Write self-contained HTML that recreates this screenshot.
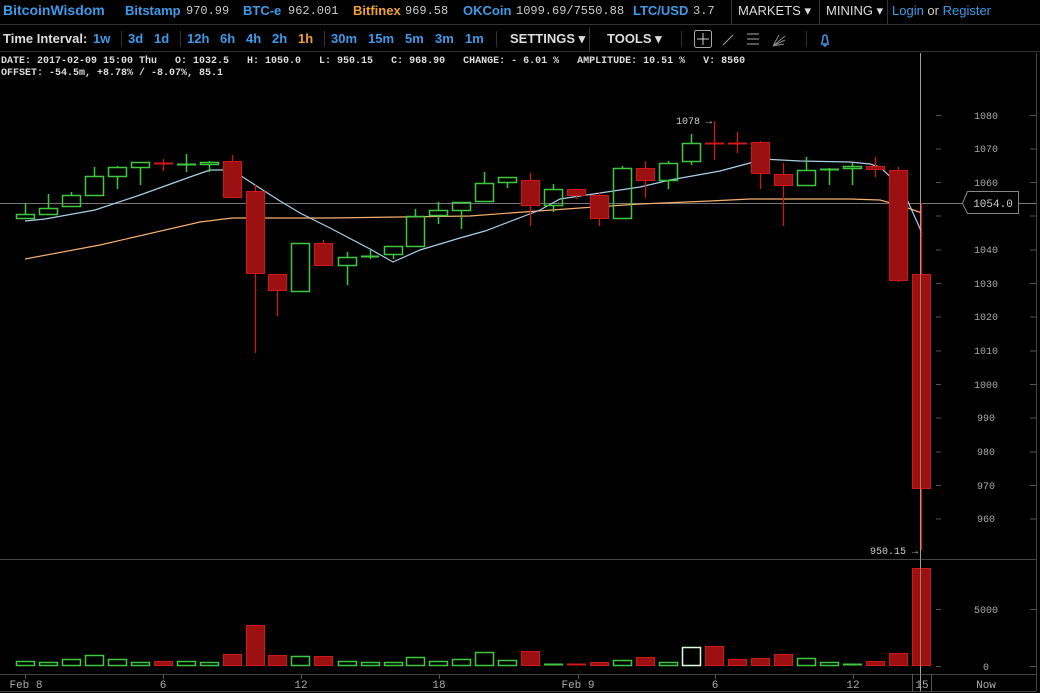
<!DOCTYPE html>
<html><head><meta charset="utf-8"><style>
*{margin:0;padding:0;box-sizing:border-box}
body{width:1040px;height:693px;background:#000;overflow:hidden;font-family:"Liberation Sans",sans-serif;position:relative}
.top{position:absolute;left:0;top:0;width:1040px;height:25px;border-bottom:1px solid #333;font-size:13px;white-space:nowrap}
.top span{position:absolute;top:3px}
.b{color:#3d9be9;font-weight:bold}
.m{font-family:"Liberation Mono",monospace;color:#ccc;font-size:12px;top:4px!important}
.bar2{position:absolute;left:0;top:26px;width:1040px;height:26px;border-bottom:1px solid #333;font-size:13px;white-space:nowrap;font-weight:bold}
.bar2 span{position:absolute;top:5px}
.w{color:#ddd}
.sep{position:absolute;width:1px;background:#333}
.info{position:absolute;left:1px;font-family:"Liberation Mono",monospace;font-size:10px;color:#ddd;white-space:pre;font-weight:bold}
svg{position:absolute;left:0;top:0}
</style></head><body>
<div class="top">
<span class="b" style="left:3px;font-size:14px;top:2px">BitcoinWisdom</span>
<span class="b" style="left:125px">Bitstamp</span><span class="m" style="left:186px">970.99</span>
<span class="b" style="left:243px">BTC-e</span><span class="m" style="left:288px">962.001</span>
<span class="b" style="left:353px;color:#f0a030">Bitfinex</span><span class="m" style="left:405px">969.58</span>
<span class="b" style="left:463px">OKCoin</span><span class="m" style="left:516px">1099.69/7550.88</span>
<span class="b" style="left:633px">LTC/USD</span><span class="m" style="left:693px">3.7</span>
<span class="w" style="left:738px">MARKETS ▾</span>
<span class="w" style="left:826px">MINING ▾</span>
<span style="left:892px;color:#3d9be9">Login <span style="position:static;color:#ccc">or</span> Register</span>
</div>
<div class="sep" style="left:731px;top:0;height:25px"></div>
<div class="sep" style="left:819px;top:0;height:25px"></div>
<div class="sep" style="left:887px;top:0;height:25px"></div>
<div class="bar2">
<span class="w" style="left:3px">Time Interval:</span>
<span class="b" style="left:93px">1w</span>
<span class="b" style="left:128px">3d</span><span class="b" style="left:154px">1d</span>
<span class="b" style="left:187px">12h</span><span class="b" style="left:220px">6h</span><span class="b" style="left:246px">4h</span><span class="b" style="left:272px">2h</span><span class="b" style="left:298px;color:#f0a030">1h</span>
<span class="b" style="left:331px">30m</span><span class="b" style="left:368px">15m</span><span class="b" style="left:405px">5m</span><span class="b" style="left:435px">3m</span><span class="b" style="left:465px">1m</span>
<span class="w" style="left:510px">SETTINGS ▾</span>
<span class="w" style="left:607px">TOOLS ▾</span>
</div>
<div class="sep" style="left:121px;top:31px;height:16px"></div>
<div class="sep" style="left:180px;top:31px;height:16px"></div>
<div class="sep" style="left:324px;top:31px;height:16px"></div>
<div class="sep" style="left:496px;top:31px;height:16px"></div>
<div class="sep" style="left:589px;top:27px;height:25px"></div>
<div class="sep" style="left:681px;top:31px;height:16px"></div>
<div class="sep" style="left:806px;top:31px;height:16px"></div>
<div class="info" style="top:56px">DATE: 2017-02-09 15:00 Thu   O: 1032.5   H: 1050.0   L: 950.15   C: 968.90   CHANGE: - 6.01 %   AMPLITUDE: 10.51 %   V: 8560</div>
<div class="info" style="top:68px">OFFSET: -54.5m, +8.78% / -8.07%, 85.1</div>
<svg width="1040" height="693" viewBox="0 0 1040 693">
<rect x="694.5" y="30.5" width="17" height="17" rx="2" fill="none" stroke="#aaa"/>
<path d="M703 33v12M697 39h12" stroke="#ccc"/>
<path d="M723 45l10-10" stroke="#aaa"/>
<path d="M747 34h12M747 39h12M747 44h12" stroke="#aaa"/>
<path d="M773 46l12-10M773 46l12-6M773 46l11-2M773 46l6-11" stroke="#888"/>
<path d="M821 44h8M822 43c0-2 1-2 1-6a2 2 0 0 1 4 0c0 4 1 4 1 6M824 45a1 1 0 0 0 2 0" stroke="#3d9be9" stroke-width="1.5" fill="none"/>
<line x1="920.5" y1="53" x2="920.5" y2="691" stroke="#777"/>
<line x1="1036.5" y1="53" x2="1036.5" y2="691" stroke="#444"/>
<line x1="0" y1="559.5" x2="1036" y2="559.5" stroke="#444"/>
<line x1="0" y1="674.5" x2="1036" y2="674.5" stroke="#444"/>
<line x1="0" y1="691.5" x2="1036" y2="691.5" stroke="#444"/>
<line x1="0" y1="203.5" x2="1036" y2="203.5" stroke="#777"/>
<g font-family="Liberation Mono,monospace" font-size="10" fill="#aaa" text-anchor="middle">
<text x="986" y="119">1080</text><text x="986" y="152">1070</text><text x="986" y="186">1060</text><text x="986" y="253">1040</text><text x="986" y="287">1030</text><text x="986" y="320">1020</text><text x="986" y="354">1010</text><text x="986" y="388">1000</text><text x="986" y="421">990</text><text x="986" y="455">980</text><text x="986" y="489">970</text><text x="986" y="522">960</text>
<text x="986" y="613">5000</text><text x="986" y="670">0</text>
<text x="986" y="688" font-size="11">Now</text>
<text x="26" y="688" font-size="11">Feb 8</text><text x="163" y="688" font-size="11">6</text><text x="301" y="688" font-size="11">12</text><text x="439" y="688" font-size="11">18</text><text x="578" y="688" font-size="11">Feb 9</text><text x="715" y="688" font-size="11">6</text><text x="853" y="688" font-size="11">12</text><text x="922" y="688" font-size="11">15</text>
<text x="694" y="124" fill="#ccc">1078 →</text>
<text x="894" y="554" fill="#ccc">950.15 →</text>
</g>
<g stroke="#555">
<path d="M936 115.5h5M936 149h5M936 182.5h5M936 216h5M936 250h5M936 283.5h5M936 317h5M936 351h5M936 384.5h5M936 418h5M936 452h5M936 485.5h5M936 519h5M936 609.5h5M936 666.5h5"/>
<path d="M1030 115.5h6M1030 149h6M1030 182.5h6M1030 216h6M1030 250h6M1030 283.5h6M1030 317h6M1030 351h6M1030 384.5h6M1030 418h6M1030 452h6M1030 485.5h6M1030 519h6M1030 609.5h6M1030 666.5h6"/>
<path d="M25.5 674v5M163.5 674v5M301.5 674v5M439.5 674v5M578.5 674v5M715.5 674v5M853.5 674v5M912.5 674v17M931.5 674v17"/>
</g>
<path d="M962.5 203.5l5-12h51v22h-51z" fill="#000" stroke="#888"/>
<text x="993" y="207" font-family="Liberation Mono,monospace" font-size="11" fill="#ccc" text-anchor="middle">1054.0</text>
<polyline fill="none" stroke="#f5b070" stroke-width="1.2" points="25,259 100,245 200,222 232,218 245,218 330,218 400,217 470,216 510,213 580,208 640,204 710,201 750,199 850,199 880,200 905,207 922,213"/>
<polyline fill="none" stroke="#a8d0e8" stroke-width="1.2" points="25,221 45,219 95,210 140,195 190,177 210,170 232,170 255,185 280,201 300,213 330,228 370,249 393,262 420,250 460,238 485,231 540,210 560,199 600,193 640,187 670,180 720,171 750,163 762,159 800,161 850,162 870,164 880,167 900,186 905,195 922,233"/>
<g stroke="#3ec83e" stroke-width="1.5" fill="none">
<path d="M25.5 203v11M48.5 194v14M71.5 192v3M71.5 206v1M94.5 167v9M117.5 166v1M117.5 176v13M140.5 167v18M186.5 154v18M209.5 161v1M209.5 164v8M347.5 252v5M347.5 265v20M370.5 250v9M393.5 254v5M415.5 209v7M438.5 202v8M438.5 215v9M461.5 210v19M484.5 172v11M507.5 182v6M553.5 184v5M553.5 205v7M622.5 166v2M668.5 161v2M668.5 180v9M691.5 134v9M691.5 161v4M806.5 157v13M829.5 168v17M852.5 163v3M852.5 168v17"/>
<rect x="16.5" y="214.5" width="18" height="4"/><rect x="39.5" y="208.5" width="18" height="6"/><rect x="62.5" y="195.5" width="18" height="11"/><rect x="85.5" y="176.5" width="18" height="19"/><rect x="108.5" y="167.5" width="18" height="9"/><rect x="131.5" y="162.5" width="18" height="5"/><rect x="200.5" y="162.5" width="18" height="2"/>
<rect x="291.5" y="243.5" width="18" height="48"/><rect x="338.5" y="257.5" width="18" height="8"/><rect x="384.5" y="246.5" width="18" height="8"/><rect x="406.5" y="216.5" width="18" height="30"/><rect x="429.5" y="210.5" width="18" height="5"/><rect x="452.5" y="202.5" width="18" height="8"/>
<rect x="475.5" y="183.5" width="18" height="18"/><rect x="498.5" y="177.5" width="18" height="5"/><rect x="544.5" y="189.5" width="18" height="16"/><rect x="613.5" y="168.5" width="18" height="50"/><rect x="659.5" y="163.5" width="18" height="17"/><rect x="682.5" y="143.5" width="18" height="18"/><rect x="797.5" y="170.5" width="18" height="15"/><rect x="843.5" y="166.5" width="18" height="2"/>
<path d="M177 164.5h19M361 256.5h18M820 169.5h19" stroke-width="2"/>
</g>
<g stroke="#d01818" fill="#9b1010">
<path d="M163.5 159v12M232.5 155v6M255.5 185v168M277.5 290v26M323.5 240v3M530.5 173v53M576.5 195v4M599.5 192v34M645.5 161v37M714.5 121v39M737.5 132v21M760.5 141v48M783.5 163v63M875.5 157v20M898.5 167v115M921.5 203v347" fill="none" stroke-width="1.3"/>
<path d="M154 163.5h19M705 143.5h19M728 143.5h19" stroke-width="2" fill="none"/>
<rect x="223.5" y="161.5" width="18" height="36"/><rect x="246.5" y="191.5" width="18" height="82"/><rect x="268.5" y="274.5" width="18" height="16"/><rect x="314.5" y="243.5" width="18" height="22"/>
<rect x="521.5" y="180.5" width="18" height="25"/><rect x="567.5" y="189.5" width="18" height="6"/><rect x="590.5" y="195.5" width="18" height="23"/><rect x="636.5" y="168.5" width="18" height="12"/>
<rect x="751.5" y="142.5" width="18" height="31"/><rect x="774.5" y="174.5" width="18" height="11"/><rect x="866.5" y="166.5" width="18" height="3"/><rect x="889.5" y="170.5" width="18" height="110"/><rect x="912.5" y="274.5" width="18" height="214"/>
</g>
<g stroke="#3ec83e" stroke-width="1.5" fill="none">
<rect x="16.5" y="661.5" width="18" height="4"/><rect x="39.5" y="662.5" width="18" height="3"/><rect x="62.5" y="659.5" width="18" height="6"/><rect x="85.5" y="655.5" width="18" height="10"/><rect x="108.5" y="659.5" width="18" height="6"/><rect x="131.5" y="662.5" width="18" height="3"/><rect x="177.5" y="661.5" width="18" height="4"/><rect x="200.5" y="662.5" width="18" height="3"/>
<rect x="291.5" y="656.5" width="18" height="9"/><rect x="338.5" y="661.5" width="18" height="4"/><rect x="361.5" y="662.5" width="18" height="3"/><rect x="384.5" y="662.5" width="18" height="3"/><rect x="406.5" y="657.5" width="18" height="8"/><rect x="429.5" y="661.5" width="18" height="4"/><rect x="452.5" y="659.5" width="18" height="6"/><rect x="475.5" y="652.5" width="18" height="13"/><rect x="498.5" y="660.5" width="18" height="5"/>
<rect x="613.5" y="660.5" width="18" height="5"/><rect x="659.5" y="662.5" width="18" height="3"/><rect x="682.5" y="647.5" width="18" height="18" stroke="#dfd"/><rect x="797.5" y="658.5" width="18" height="7"/><rect x="820.5" y="662.5" width="18" height="3"/>
<path d="M544 664.5h19M843 664.5h19" stroke-width="2"/>
</g>
<g stroke="#d01818" fill="#9b1010">
<rect x="154.5" y="661.5" width="18" height="4"/><rect x="223.5" y="654.5" width="18" height="11"/><rect x="246.5" y="625.5" width="18" height="40"/><rect x="268.5" y="655.5" width="18" height="10"/><rect x="314.5" y="656.5" width="18" height="9"/>
<rect x="521.5" y="651.5" width="18" height="14"/><rect x="590.5" y="662.5" width="18" height="3"/><rect x="636.5" y="657.5" width="18" height="8"/><rect x="705.5" y="646.5" width="18" height="19"/><rect x="728.5" y="659.5" width="18" height="6"/><rect x="751.5" y="658.5" width="18" height="7"/><rect x="774.5" y="654.5" width="18" height="11"/><rect x="866.5" y="661.5" width="18" height="4"/><rect x="889.5" y="653.5" width="18" height="12"/><rect x="912.5" y="568.5" width="18" height="97"/>
<path d="M567 664.5h19" stroke-width="2" fill="none"/>
</g>
<line x1="920.5" y1="53" x2="920.5" y2="691" stroke="#bbb" stroke-opacity="0.6"/>
</svg>
</body></html>
